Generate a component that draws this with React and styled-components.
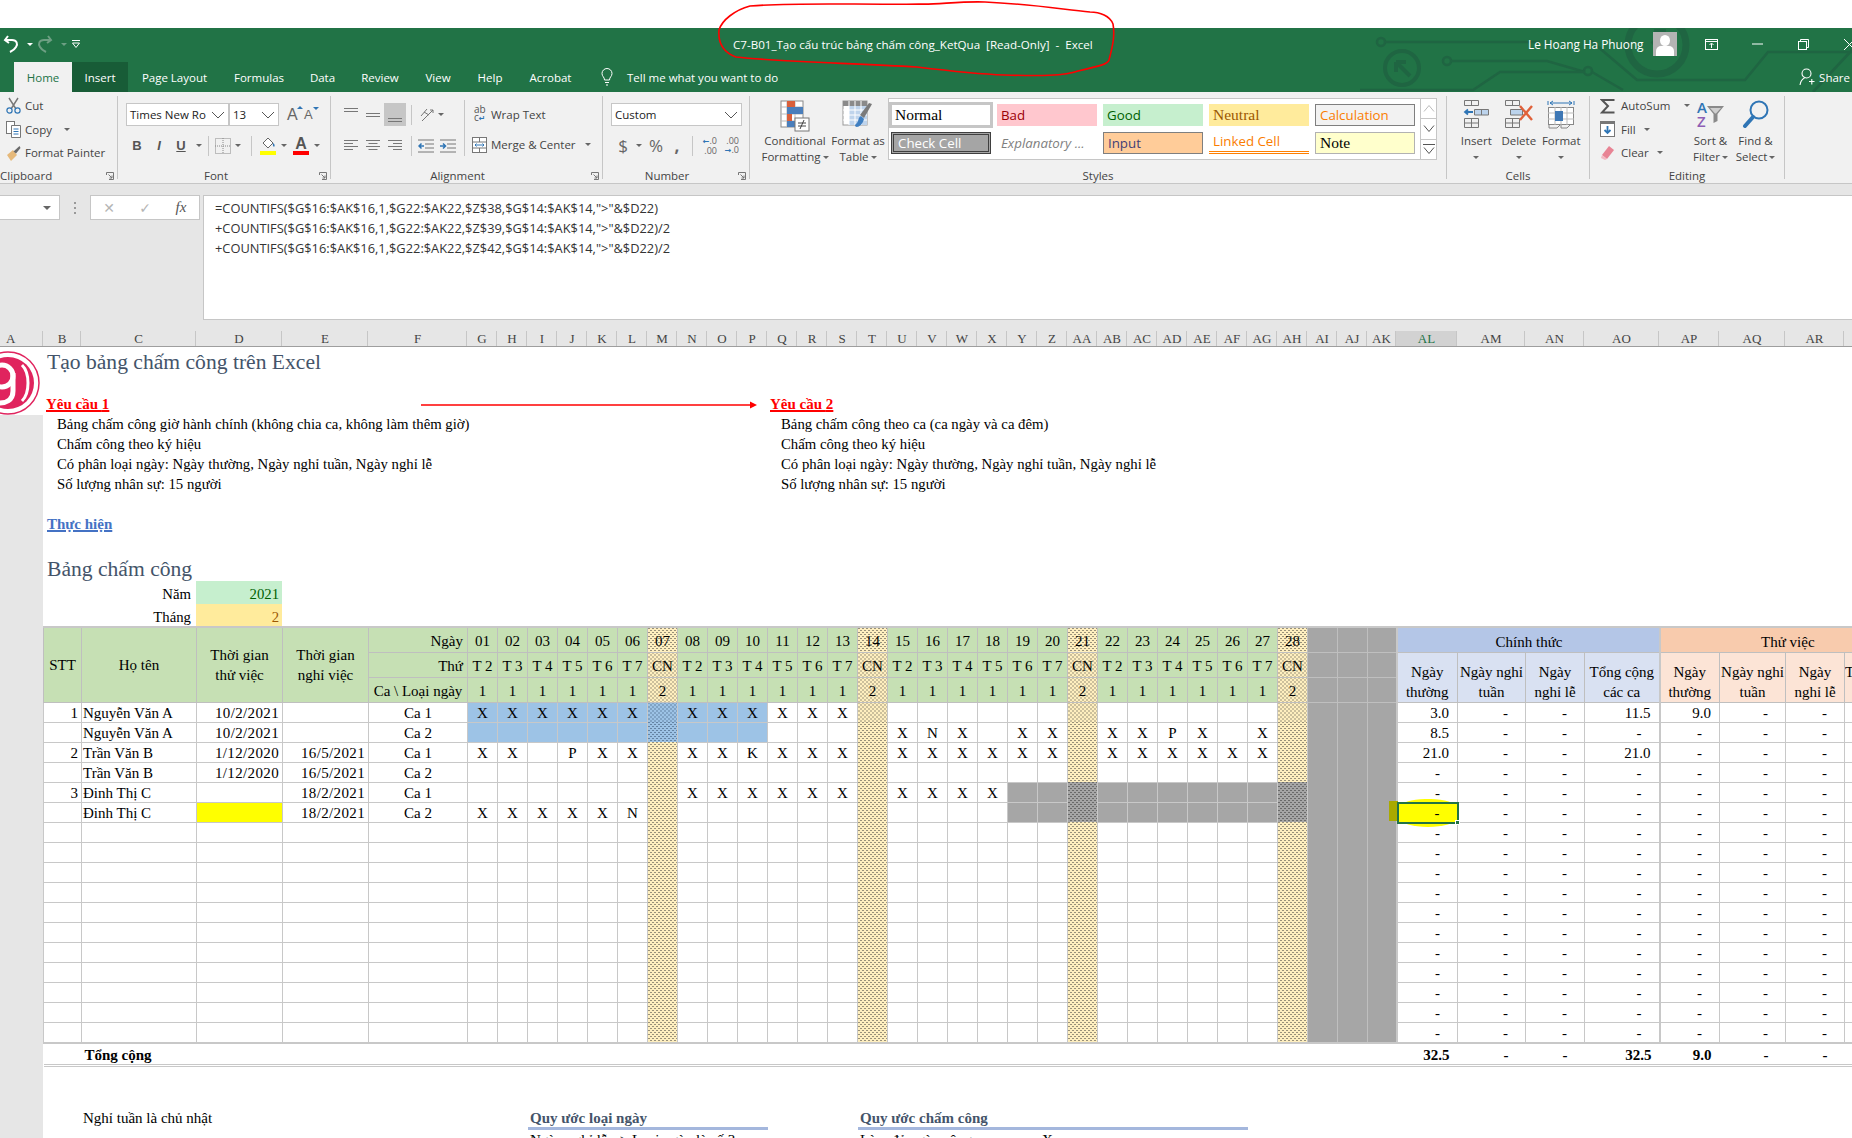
import React from 'react';
import styled, { createGlobalStyle, css } from 'styled-components';

const UI = '"Open Sans", "Noto Sans", sans-serif';
const SERIF = '"Liberation Serif", "Times New Roman", serif';

const GlobalStyle = createGlobalStyle`
  html, body { margin: 0; padding: 0; background: #fff; }
  * { box-sizing: border-box; }
  #root { width: 1852px; height: 1138px; overflow: hidden; }
`;

/* column widths of the sheet, B first (A is the gutter) */
const dayWidths = Array.from({ length: 31 }, (_, i) => (i === 30 ? 29 : 30));
const rightWidths = [61, 68, 59, 75, 60, 66, 59, 60];
const leftWidths = [38, 115, 86, 86, 99];
const colWidths = [...leftWidths, ...dayWidths, ...rightWidths];

const letters = [
  ...'ABCDEFGHIJKLMNOPQRSTUVWXYZ'.split(''),
  ...'ABCDEFGHIJKLMNOPQR'.split('').map((c) => 'A' + c),
  '',
];

const App = () => (
  <Page>
    <GlobalStyle />
    <TopGap />
    <Chrome>
      <Circuit />
      <TitleBar>
        <QuickAccess>
          <UndoIcon />
          <MiniCaret $light />
          <RedoIcon />
          <MiniCaret $dim />
          <CustomizeIcon />
        </QuickAccess>
        <WindowTitle>C7-B01_Tạo cấu trúc bảng chấm công_KetQua  [Read-Only]  -  Excel</WindowTitle>
        <UserName>Le Hoang Ha Phuong</UserName>
        <Avatar />
        <WindowButtons />
      </TitleBar>
      <TabRow>
        {[
          ['Home', 58],
          ['Insert', 56],
          ['Page Layout', 93],
          ['Formulas', 76],
          ['Data', 51],
          ['Review', 64],
          ['View', 52],
          ['Help', 52],
          ['Acrobat', 69],
        ].map(([name, w]) => (
          <Tab key={name} $w={w} $active={name === 'Home'} $hover={name === 'Insert'}>
            {name}
          </Tab>
        ))}
        <TellMe>
          <BulbIcon />
          Tell me what you want to do
        </TellMe>
        <Share>
          <ShareIcon />
          Share
        </Share>
      </TabRow>
    </Chrome>
    <Ribbon />
    <FormulaArea>
      <NameBox>
        <SolidCaret />
      </NameBox>
      <Dots>
        <i />
        <i />
        <i />
      </Dots>
      <FuncBox>
        <FuncBtn $c="#b5b5b5">✕</FuncBtn>
        <FuncBtn $c="#b5b5b5">✓</FuncBtn>
        <FxLabel>fx</FxLabel>
      </FuncBox>
      <FormulaBox>
        <div>=COUNTIFS($G$16:$AK$16,1,$G22:$AK22,$Z$38,$G$14:$AK$14,"&gt;"&amp;$D22)</div>
        <div>+COUNTIFS($G$16:$AK$16,1,$G22:$AK22,$Z$39,$G$14:$AK$14,"&gt;"&amp;$D22)/2</div>
        <div>+COUNTIFS($G$16:$AK$16,1,$G22:$AK22,$Z$42,$G$14:$AK$14,"&gt;"&amp;$D22)/2</div>
      </FormulaBox>
    </FormulaArea>
    <ColHeaders>
      <ColHead $w={43} $start>A</ColHead>
      {colWidths.map((w, i) => (
        <ColHead key={i} $w={w} $sel={letters[i + 1] === 'AL'}>
          {letters[i + 1]}
        </ColHead>
      ))}
    </ColHeaders>
    <Sheet>
      <Gutter>
        <Logo />
      </Gutter>
      <SheetBody>
        <Notes />
        <Attendance />
        <Footer />
      </SheetBody>
    </Sheet>
    <HandCircle />
  </Page>
);

/* ---------- ribbon ---------- */

const Ribbon = () => (
  <RibbonBar>
    <Group $w={118} label="Clipboard" labelPad={66} launcher>
      <StackCol $pl={6}>
        <SmallRow><ScissorsIcon />Cut</SmallRow>
        <SmallRow><CopyIcon />Copy<MiniCaret $gap={8} /></SmallRow>
        <SmallRow><PainterIcon />Format Painter</SmallRow>
      </StackCol>
    </Group>

    <Group $w={213} label="Font" labelPad={16} launcher>
      <ToolRows $pl={8}>
        <ToolRow>
          <SelectBox $w={103}>Times New Ro<Chevron /></SelectBox>
          <SelectBox $w={50}>13<Chevron /></SelectBox>
          <FontGrow $ml={8}>A<i /></FontGrow>
          <FontGrow $small $ml={7}>A<i /></FontGrow>
        </ToolRow>
        <ToolRow>
          <LetterBtn $italic={false}>B</LetterBtn>
          <LetterBtn $italic>I</LetterBtn>
          <LetterBtn $under>U</LetterBtn>
          <MiniCaret />
          <ToolSep $ml={6} />
          <BordersIcon />
          <MiniCaret $gap={4} />
          <ToolSep $ml={10} />
          <FillIcon />
          <MiniCaret $gap={5} />
          <ColorA />
          <MiniCaret $gap={5} />
        </ToolRow>
      </ToolRows>
    </Group>

    <Group $w={272} label="Alignment" labelPad={18} launcher>
      <AlignCols>
        <ToolRows $pl={9} $w={133}>
          <ToolRow>
            <AlignBtn><LinesIcon rows={[[2, 14], [5, 14]]} /></AlignBtn>
            <AlignBtn><LinesIcon rows={[[7, 14], [10, 14]]} /></AlignBtn>
            <AlignBtn $on><LinesIcon rows={[[12, 14], [15, 14]]} /></AlignBtn>
            <ToolSep $ml={5} />
            <OrientIcon />
            <MiniCaret $gap={3} />
          </ToolRow>
          <ToolRow>
            <AlignBtn><LinesIcon rows={[[3, 14], [6, 9], [9, 14], [12, 9]]} /></AlignBtn>
            <AlignBtn><LinesIcon rows={[[3, 14], [6, 9], [9, 14], [12, 9]]} center /></AlignBtn>
            <AlignBtn><LinesIcon rows={[[3, 14], [6, 9], [9, 14], [12, 9]]} right /></AlignBtn>
            <ToolSep $ml={5} />
            <IndentIcon />
            <IndentIcon flip />
          </ToolRow>
        </ToolRows>
        <ToolRows $pl={7} $sep>
          <ToolRow><WrapIcon /><RibbonText $ml={4}>Wrap Text</RibbonText></ToolRow>
          <ToolRow><MergeIcon /><RibbonText $ml={4}>Merge &amp; Center</RibbonText><MiniCaret $gap={9} /></ToolRow>
        </ToolRows>
      </AlignCols>
    </Group>

    <Group $w={147} label="Number" labelPad={18} launcher>
      <ToolRows $pl={8}>
        <ToolRow><SelectBox $w={131}>Custom<Chevron /></SelectBox></ToolRow>
        <ToolRow>
          <SymbolBtn $w={24}>$</SymbolBtn>
          <MiniCaret $gap={1} />
          <SymbolBtn $w={28}>%</SymbolBtn>
          <SymbolBtn $w={14} $bold>,</SymbolBtn>
          <ToolSep $ml={8} />
          <DecimalIcon />
          <DecimalIcon flip />
        </ToolRow>
      </ToolRows>
    </Group>

    <Group $w={697} label="Styles">
      <StylesBody>
        <BigBtn $w={66}>
          <CondIcon />
          <BigLabel>Conditional<br />Formatting<MiniCaret $gap={2} /></BigLabel>
        </BigBtn>
        <BigBtn $w={60}>
          <TableIcon />
          <BigLabel>Format as<br />Table<MiniCaret $gap={2} /></BigLabel>
        </BigBtn>
        <Gallery>
          <GalleryGrid>
            <StyleCell $v="normal">Normal</StyleCell>
            <StyleCell $v="bad">Bad</StyleCell>
            <StyleCell $v="good">Good</StyleCell>
            <StyleCell $v="neutral">Neutral</StyleCell>
            <StyleCell $v="calc">Calculation</StyleCell>
            <StyleCell $v="check">Check Cell</StyleCell>
            <StyleCell $v="explain">Explanatory ...</StyleCell>
            <StyleCell $v="input">Input</StyleCell>
            <StyleCell $v="linked">Linked Cell</StyleCell>
            <StyleCell $v="note">Note</StyleCell>
          </GalleryGrid>
          <GalleryScroll>
            <ScrollBtn $dim><ScrollChevron up /></ScrollBtn>
            <ScrollBtn><ScrollChevron /></ScrollBtn>
            <ScrollBtn $bar><ScrollChevron /></ScrollBtn>
          </GalleryScroll>
        </Gallery>
      </StylesBody>
    </Group>

    <Group $w={143} label="Cells">
      <CellsBody>
        <CellBtn><InsertIcon /><BigLabel>Insert<br /><MiniCaret $gap={0} /></BigLabel></CellBtn>
        <CellBtn><DeleteIcon /><BigLabel>Delete<br /><MiniCaret $gap={0} /></BigLabel></CellBtn>
        <CellBtn><FormatIcon /><BigLabel>Format<br /><MiniCaret $gap={0} /></BigLabel></CellBtn>
      </CellsBody>
    </Group>

    <Group $w={195} label="Editing">
      <EditingBody>
        <StackCol $w={88}>
          <SmallRow $gap={6}><SigmaIcon />AutoSum<MiniCaret $gap={8} /></SmallRow>
          <SmallRow $gap={6}><FillDownIcon />Fill<MiniCaret $gap={2} /></SmallRow>
          <SmallRow $gap={6}><EraserIcon />Clear<MiniCaret $gap={2} /></SmallRow>
        </StackCol>
        <BigBtn $w={45}>
          <SortIcon />
          <BigLabel>Sort &amp;<br />Filter<MiniCaret $gap={2} /></BigLabel>
        </BigBtn>
        <BigBtn $w={45}>
          <FindIcon />
          <BigLabel>Find &amp;<br />Select<MiniCaret $gap={2} /></BigLabel>
        </BigBtn>
      </EditingBody>
    </Group>
  </RibbonBar>
);

const Group = ({ $w, label, labelPad, launcher, children }) => (
  <GroupBox $w={$w}>
    <GroupBody>{children}</GroupBody>
    <GroupLabel $pr={labelPad}>{label}</GroupLabel>
    {launcher && <LauncherIcon />}
  </GroupBox>
);

/* ---------- sheet notes ---------- */

const reqLines = [
  ['Bảng chấm công giờ hành chính (không chia ca, không làm thêm giờ)', 'Bảng chấm công theo ca (ca ngày và ca đêm)'],
  ['Chấm công theo ký hiệu', 'Chấm công theo ký hiệu'],
  ['Có phân loại ngày: Ngày thường, Ngày nghỉ tuần, Ngày nghỉ lễ', 'Có phân loại ngày: Ngày thường, Ngày nghỉ tuần, Ngày nghỉ lễ'],
  ['Số lượng nhân sự: 15 người', 'Số lượng nhân sự: 15 người'],
];

const Notes = () => (
  <>
    <SheetTitle $h={30}>Tạo bảng chấm công trên Excel</SheetTitle>
    <Spacer $h={16} />
    <ReqRow>
      <RedArrow />
      {[0, 1].map((col) => (
        <Req key={col}>
          <ReqHead>Yêu cầu {col + 1}</ReqHead>
          {reqLines.map((l) => (
            <ReqLine key={l[col]}>{l[col]}</ReqLine>
          ))}
        </Req>
      ))}
    </ReqRow>
    <Spacer $h={20} />
    <LinkLine>Thực hiện</LinkLine>
    <Spacer $h={20} />
    <SheetTitle $h={27} $lift>Bảng chấm công</SheetTitle>
    <ParamRow>
      <ParamLabel>Năm</ParamLabel>
      <ParamValue $bg="#c6efce" $c="#006100">2021</ParamValue>
    </ParamRow>
    <ParamRow>
      <ParamLabel>Tháng</ParamLabel>
      <ParamValue $bg="#ffeb9c" $c="#9c5700">2</ParamValue>
    </ParamRow>
  </>
);

/* ---------- attendance table ---------- */

const weekdays = ['T 2', 'T 3', 'T 4', 'T 5', 'T 6', 'T 7', 'CN'];
const days = Array.from({ length: 28 }, (_, i) => i + 1);
const isSunday = (d) => d % 7 === 0;
const dash = '-';

const marks = (from, to, skip = {}) => {
  const out = {};
  for (let d = from; d <= to; d++) if (!isSunday(d)) out[d] = 'X';
  return { ...out, ...skip };
};

const employees = [
  { stt: 1, name: 'Nguyễn Văn A', start: '10/2/2021', end: '', ca: 'Ca 1', blue: true, marks: marks(1, 13), totals: ['3.0', dash, dash, '11.5', '9.0', dash, dash] },
  { name: 'Nguyễn Văn A', start: '10/2/2021', end: '', ca: 'Ca 2', blue: true, marks: { ...marks(15, 27, { 16: 'N', 18: '', 24: 'P', 26: '' }) }, totals: ['8.5', dash, dash, dash, dash, dash, dash] },
  { stt: 2, name: 'Trần Văn B', start: '1/12/2020', end: '16/5/2021', ca: 'Ca 1', marks: marks(1, 27, { 3: '', 4: 'P', 10: 'K' }), totals: ['21.0', dash, dash, '21.0', dash, dash, dash] },
  { name: 'Trần Văn B', start: '1/12/2020', end: '16/5/2021', ca: 'Ca 2', marks: {} },
  { stt: 3, name: 'Đinh Thị C', start: '', end: '18/2/2021', ca: 'Ca 1', gray: true, marks: marks(8, 18) },
  { name: 'Đinh Thị C', start: '', startBg: '#ffff00', end: '18/2/2021', ca: 'Ca 2', gray: true, selected: true, marks: marks(1, 6, { 6: 'N' }) },
  ...Array.from({ length: 11 }, () => ({ blank: true, marks: {} })),
];

const dayFill = (emp, d) => {
  if (emp.blue && d <= 10) return 'blue';
  if (emp.gray && d >= 19) return 'gray';
  return 'none';
};

const subHeads = ['Ngày<thường', 'Ngày nghỉ<tuần', 'Ngày<nghỉ lễ', 'Tổng cộng<các ca'];

const Attendance = () => (
  <Table>
    <colgroup>
      {colWidths.map((w, i) => (
        <col key={i} width={w} />
      ))}
    </colgroup>
    <tbody>
      <HeadRow>
        <HeadCell rowSpan={3}>STT</HeadCell>
        <HeadCell rowSpan={3}>Họ tên</HeadCell>
        <HeadCell rowSpan={3}>Thời gian<br />thử việc</HeadCell>
        <HeadCell rowSpan={3}>Thời gian<br />nghỉ việc</HeadCell>
        <HeadCell $right $drop>Ngày</HeadCell>
        {days.map((d) => (
          <HeadCell key={d} $drop $cn={isSunday(d)}>{String(d).padStart(2, '0')}</HeadCell>
        ))}
        <GrayCell /><GrayCell /><GrayCell />
        <BandCell colSpan={4} $bg="#b4c6e7" $pl={5}>Chính thức</BandCell>
        <BandCell colSpan={4} $bg="#f8cbad" $pl={14}>Thử việc</BandCell>
      </HeadRow>
      <HeadRow>
        <HeadCell $right $drop>Thứ</HeadCell>
        {days.map((d) => (
          <HeadCell key={d} $drop $cn={isSunday(d)}>{weekdays[(d - 1) % 7]}</HeadCell>
        ))}
        <GrayCell /><GrayCell /><GrayCell />
        {subHeads.map((t, i) => (
          <SubHead key={t} rowSpan={2} $bg="#d9e1f2" $thick={i === 0}>{t.split('<')[0]}<br />{t.split('<')[1]}</SubHead>
        ))}
        {subHeads.map((t, i) => (
          <SubHead key={t} rowSpan={2} $bg="#fce4d6" $thick={i === 0}>{t.split('<')[0]}<br />{t.split('<')[1]}</SubHead>
        ))}
      </HeadRow>
      <HeadRow>
        <HeadCell $drop>Ca \ Loại ngày</HeadCell>
        {days.map((d) => (
          <HeadCell key={d} $drop $cn={isSunday(d)}>{isSunday(d) ? 2 : 1}</HeadCell>
        ))}
        <GrayCell /><GrayCell /><GrayCell />
      </HeadRow>
      {employees.map((emp, r) => (
        <DataRow key={r}>
          <Cell $align="right">{emp.stt}</Cell>
          <NameCell>{emp.name}</NameCell>
          <Cell $align="right" $bg={emp.startBg} $date>{emp.start}</Cell>
          <Cell $align="right" $date>{emp.end}</Cell>
          <Cell $align="center">{emp.ca}</Cell>
          {days.map((d) => (
            <DayCell key={d} $cn={isSunday(d)} $fill={dayFill(emp, d)}>{emp.marks[d]}</DayCell>
          ))}
          <GrayCell $flat /><GrayCell $flat /><GrayCell $flat />
          {Array.from({ length: 7 }, (_, i) => {
            const v = emp.totals ? emp.totals[i] : dash;
            return (
              <NumCell key={i} $dash={v === dash} $thick={i === 0 || i === 4}>
                {v}
                {emp.selected && i === 0 && <SelectionMark />}
              </NumCell>
            );
          })}
          <Cell />
        </DataRow>
      ))}
      <TotalRow>
        <TotalCell />
        <TotalCell $pl={3}>Tổng cộng</TotalCell>
        <TotalCell colSpan={34} />
        {['32.5', dash, dash, '32.5', '9.0', dash, dash].map((v, i) => (
          <TotalCell key={i} $num $dash={v === dash}>{v}</TotalCell>
        ))}
        <TotalCell />
      </TotalRow>
    </tbody>
  </Table>
);

const Footer = () => (
  <FooterRow>
    <FooterNote>Nghỉ tuần là chủ nhật</FooterNote>
    <Legend $w={240} $mr={90}>
      <LegendHead>Quy ước loại ngày</LegendHead>
      <LegendLine>Ngày nghỉ lễ =&gt; Loại ngày là số 3</LegendLine>
    </Legend>
    <Legend $w={390}>
      <LegendHead>Quy ước chấm công</LegendHead>
      <LegendLine><LegendKey>Làm đủ ngày công</LegendKey>X</LegendLine>
    </Legend>
  </FooterRow>
);

/* ---------- drawings ---------- */

const Svg = styled.svg`
  display: block;
  flex: none;
  margin-left: ${(p) => p.$ml || 0}px;
`;

const UndoIcon = () => (
  <Svg width="16" height="18" viewBox="0 0 16 18" fill="none" stroke="#fff" strokeWidth="2">
    <path d="M5 1 L2 5 L6 8" />
    <path d="M2 5 H9 C14 5 15 9 13 12 C12 14 9 16 7 17" />
  </Svg>
);
const RedoIcon = () => (
  <Svg width="16" height="18" viewBox="0 0 16 18" fill="none" stroke="#6d9f83" strokeWidth="2">
    <path d="M11 1 L14 5 L10 8" />
    <path d="M14 5 H7 C2 5 1 9 3 12 C4 14 7 16 9 17" />
  </Svg>
);
const CustomizeIcon = () => (
  <Svg width="10" height="10" viewBox="0 0 10 10" fill="none" stroke="#fff">
    <path d="M1 1.5 H9" />
    <path d="M1.5 4 L5 8.5 L8.5 4 Z" />
  </Svg>
);
const BulbIcon = () => (
  <Svg width="14" height="18" viewBox="0 0 14 18" fill="none" stroke="#fff" strokeWidth="1">
    <path d="M4.5 12 C4.5 9 2 8.5 2 5.5 A5 5 0 0 1 12 5.5 C12 8.5 9.5 9 9.5 12 Z" />
    <path d="M5 14.5 H9 M6 17 H8" />
  </Svg>
);
const ShareIcon = () => (
  <Svg width="16" height="18" viewBox="0 0 16 18" fill="none" stroke="#fff" strokeWidth="1.1">
    <circle cx="7.5" cy="5.5" r="4.5" />
    <path d="M1 17 C1.5 13 3.5 11 5.5 10 M10 13.5 H15.5 M12.8 11 V16.5" />
  </Svg>
);

const Circuit = () => (
  <CircuitSvg viewBox="1360 28 492 64" width="492" height="64" fill="none" stroke="#1f6542" strokeWidth="2.6">
    <circle cx="1381" cy="42" r="4" />
    <path d="M1385 42 H1540" />
    <circle cx="1402" cy="68" r="17" strokeWidth="4" />
    <path d="M1396 62 L1410 76 M1396 62 H1406 M1396 62 V72" strokeWidth="4" />
    <circle cx="1447" cy="61" r="4" />
    <path d="M1451 61 H1547 L1585 72" />
    <circle cx="1588" cy="71" r="4" />
    <path d="M1360 90 H1473 L1500 72 H1585 M1592 72 L1623 90" />
    <circle cx="1657" cy="45" r="29" strokeWidth="7" />
    <path d="M1590 40 L1637 80 H1745 L1768 52 H1852 M1813 92 L1852 50" />
    <path d="M1652 44 L1664 32 M1654 31 H1664 V41" strokeWidth="4" />
  </CircuitSvg>
);

const WindowButtons = () => (
  <>
    <WinBtn>
      <Svg width="13" height="11" viewBox="0 0 13 11" fill="none" stroke="#fff">
        <rect x="0.5" y="0.5" width="12" height="10" />
        <path d="M0.5 2.5 H12.5 M6.5 9 V4.5 M4.5 6 L6.5 4 L8.5 6" />
      </Svg>
    </WinBtn>
    <WinBtn>
      <Svg width="11" height="2" viewBox="0 0 11 2" stroke="#fff"><path d="M0 1 H11" /></Svg>
    </WinBtn>
    <WinBtn>
      <Svg width="11" height="11" viewBox="0 0 11 11" fill="none" stroke="#fff">
        <rect x="0.5" y="2.5" width="8" height="8" />
        <path d="M2.5 2.5 V0.5 H10.5 V8.5 H8.5" />
      </Svg>
    </WinBtn>
    <WinBtn>
      <Svg width="11" height="11" viewBox="0 0 11 11" stroke="#fff"><path d="M0 0 L11 11 M11 0 L0 11" /></Svg>
    </WinBtn>
  </>
);

const Chevron = () => (
  <Svg $ml={2} width="14" height="8" viewBox="0 0 14 8" fill="none" stroke="#555">
    <path d="M1 1 L7 7 L13 1" />
  </Svg>
);

const ScrollChevron = ({ up }) => (
  <Svg width="12" height="7" viewBox="0 0 12 7" fill="none" stroke="currentColor">
    <path d={up ? 'M1 6.5 L6 .5 L11 6.5' : 'M1 .5 L6 6.5 L11 .5'} />
  </Svg>
);

const ScissorsIcon = () => (
  <Svg width="15" height="17" viewBox="0 0 15 17" fill="none">
    <path d="M3 1 L10 12 M12 1 L5 12" stroke="#777" strokeWidth="1.4" />
    <circle cx="3.5" cy="13.5" r="2.6" stroke="#2f75b5" strokeWidth="1.2" />
    <circle cx="11.5" cy="13.5" r="2.6" stroke="#2f75b5" strokeWidth="1.2" />
  </Svg>
);
const CopyIcon = () => (
  <Svg width="15" height="17" viewBox="0 0 15 17" fill="#fff" stroke="#777">
    <rect x="0.5" y="0.5" width="8" height="12" />
    <path d="M5.5 4.5 H14.5 V16.5 H5.5 Z" />
    <path d="M7.5 8 H12.5 M7.5 10.5 H12.5 M7.5 13 H12.5" stroke="#2f75b5" />
  </Svg>
);
const PainterIcon = () => (
  <Svg width="15" height="16" viewBox="0 0 15 16" fill="none">
    <path d="M1 10 L7 5 L11 10 L5 16 Z" fill="#e6b97a" />
    <path d="M7.5 6.5 L13.5 1 L14.5 3 L10 8.5 Z" fill="#6a6a6a" />
  </Svg>
);
const BordersIcon = () => (
  <Svg $ml={6} width="16" height="16" viewBox="0 0 16 16" fill="none" stroke="#888" strokeDasharray="1 1">
    <rect x="0.5" y="0.5" width="15" height="15" />
    <path d="M8 0 V16 M0 8 H16" />
  </Svg>
);
const FillIcon = () => (
  <Svg $ml={8} width="16" height="19" viewBox="0 0 16 19">
    <path d="M3 7 L8 2 L13 7 L8 12 Z" fill="#fff" stroke="#666" />
    <path d="M13 7 C15 8 15 10 14 11 C13 10 12.5 9 13 7 Z" fill="#2f75b5" />
    <rect y="15" width="16" height="4" fill="#ffff00" />
  </Svg>
);
const ColorA = () => (
  <ColorABox>
    A
    <i />
  </ColorABox>
);
const LinesIcon = ({ rows, center, right }) => (
  <Svg width="14" height="18" viewBox="0 0 14 18" stroke="#777">
    {rows.map(([y, w]) => {
      const x = right ? 14 - w : center ? (14 - w) / 2 : 0;
      return <path key={y} d={`M${x} ${y + 0.5} H${x + w}`} />;
    })}
  </Svg>
);
const OrientIcon = () => (
  <Svg $ml={7} width="16" height="16" viewBox="0 0 16 16" fill="none" stroke="#777">
    <path d="M2 9 L8 2 M5 5 L10 8 M3 14 L14 3 M11 3 H14 V6" />
  </Svg>
);
const IndentIcon = ({ flip }) => (
  <Svg $ml={6} width="16" height="14" viewBox="0 0 16 14" fill="none">
    <path d="M0 1 H16 M7 5 H16 M7 9 H16 M0 13 H16" stroke="#777" />
    <path d={flip ? 'M0 7 H5 M3 4.5 L5.5 7 L3 9.5' : 'M6 7 H1 M3.5 4.5 L1 7 L3.5 9.5'} stroke="#2f75b5" strokeWidth="1.5" />
  </Svg>
);
const WrapIcon = () => (
  <WrapBox>
    <span>ab</span>
    <span>c<b>↵</b></span>
  </WrapBox>
);
const MergeIcon = () => (
  <Svg width="15" height="16" viewBox="0 0 15 16" fill="#fff" stroke="#777">
    <rect x="0.5" y="0.5" width="14" height="15" />
    <path d="M0 5 H15 M0 11 H15 M7.5 0 V5 M7.5 11 V16" />
    <path d="M3 8 H12 M4.5 6.5 L3 8 L4.5 9.5 M10.5 6.5 L12 8 L10.5 9.5" stroke="#2f75b5" fill="none" />
  </Svg>
);
const DecimalIcon = ({ flip }) => (
  <DecimalBox $ml={flip ? 6 : 8}>
    {flip ? <><span>.00</span><span><b>→</b>.0</span></> : <><span><b>←</b>.0</span><span>.00</span></>}
  </DecimalBox>
);
const CondIcon = () => (
  <Svg width="30" height="32" viewBox="0 0 30 32">
    <rect x="1" y="1" width="22" height="26" fill="#fff" stroke="#8a8a8a" />
    <path d="M7 1 V27 M15 1 V27 M1 7 H23 M1 14 H23 M1 21 H23" stroke="#bbb" />
    <rect x="7" y="1" width="8" height="6" fill="#d9603b" />
    <rect x="7" y="7" width="16" height="7" fill="#4a7ebb" />
    <rect x="7" y="14" width="5" height="7" fill="#d9603b" />
    <rect x="7" y="21" width="8" height="6" fill="#4a7ebb" />
    <rect x="15" y="18" width="14" height="13" fill="#fff" stroke="#777" />
    <path d="M18 23 H26 M18 26 H26 M24 20 L20 29" stroke="#444" fill="none" />
  </Svg>
);
const TableIcon = () => (
  <Svg width="32" height="32" viewBox="0 0 32 32">
    <rect x="1" y="1" width="24" height="24" fill="#fff" stroke="#9a9a9a" />
    <rect x="1" y="1" width="24" height="5" fill="#8a8a8a" />
    <rect x="7" y="6" width="18" height="19" fill="#bfd4ec" />
    <path d="M7 1 V25 M13 1 V25 M19 1 V25 M1 10 H25 M1 15 H25 M1 20 H25" stroke="#fff" />
    <path d="M30 4 L22 18 L18 15 L27 3 Z" fill="#7a7a7a" />
    <path d="M19 16 C15 18 18 21 13 25 C13 29 20 27 22 19 Z" fill="#3f7fc1" />
  </Svg>
);
const InsertIcon = () => (
  <Svg width="26" height="28" viewBox="0 0 26 28" fill="none" stroke="#777">
    <path d="M1.5 .5 H15.5 V5.5 H1.5 Z M8.5 .5 V5.5" />
    <path d="M11.5 9.5 H25.5 V15 H11.5 Z M18.5 9.5 V15" fill="#bcd3ec" />
    <path d="M10 12 H2 M5 9.5 L2 12 L5 14.5" stroke="#2f75b5" strokeWidth="1.8" />
    <path d="M1.5 18.5 H15.5 V27.5 H1.5 Z M8.5 18.5 V27.5 M1.5 23 H15.5" />
  </Svg>
);
const DeleteIcon = () => (
  <Svg width="30" height="28" viewBox="0 0 30 28" fill="none" stroke="#777">
    <path d="M1.5 .5 H15.5 V5.5 H1.5 Z M8.5 .5 V5.5" />
    <path d="M6.5 9.5 H18.5 V15 H6.5 Z" fill="#bcd3ec" />
    <path d="M1.5 18.5 H15.5 V27.5 H1.5 Z M8.5 18.5 V27.5 M1.5 23 H15.5" />
    <path d="M16 6 L28 20 M28 6 L16 20" stroke="#e0613a" strokeWidth="2.4" />
  </Svg>
);
const FormatIcon = () => (
  <Svg width="28" height="30" viewBox="0 0 28 30" fill="none" stroke="#888">
    <path d="M1 1 V5 M27 1 V5 M3 3 H25 M3 3 L6 1 M3 3 L6 5 M25 3 L22 1 M25 3 L22 5" stroke="#2f75b5" />
    <rect x="1.5" y="7.5" width="25" height="17" fill="#fff" />
    <path d="M8 7 V25 M14 7 V25 M20 7 V25 M1 13 H27 M1 19 H27" stroke="#bbb" />
    <rect x="8" y="11" width="8" height="10" fill="#3f78b5" stroke="none" />
    <path d="M2 25 V28 H10 L13 25 M14 25 V28 H20 L23 25" />
  </Svg>
);
const SigmaIcon = () => (
  <Svg width="15" height="16" viewBox="0 0 15 16" fill="none" stroke="#555" strokeWidth="2">
    <path d="M14.5 2 H2 L8 8 L2 14.5 H14.5" />
  </Svg>
);
const FillDownIcon = () => (
  <Svg width="15" height="16" viewBox="0 0 15 16">
    <rect x="0.5" y="0.5" width="14" height="15" fill="#fff" stroke="#777" />
    <rect x="0" y="0" width="15" height="3" fill="#777" />
    <path d="M7.5 5 V12 M4.5 9 L7.5 12 L10.5 9" stroke="#2f75b5" strokeWidth="1.8" fill="none" />
  </Svg>
);
const EraserIcon = () => (
  <Svg width="15" height="14" viewBox="0 0 15 14">
    <path d="M9 0 L14 4 L7 13 L2 9 Z" fill="#e88494" />
    <path d="M2 9 L7 13 L5 14 L1 12 Z" fill="#f3b9c2" />
  </Svg>
);
const SortIcon = () => (
  <SortBox>
    <AZ>
      <span>A</span>
      <span>Z</span>
    </AZ>
    <Svg width="17" height="17" viewBox="0 0 17 17">
      <path d="M0 0 H17 L10.5 8 V15 L6.5 17 V8 Z" fill="#8a8a8a" />
      <path d="M3 2 H14 L9 7.5 H8 Z" fill="#cfcfcf" />
    </Svg>
  </SortBox>
);
const FindIcon = () => (
  <Svg width="28" height="28" viewBox="0 0 28 28" fill="none" stroke="#2f75b5">
    <circle cx="17" cy="10" r="8.5" strokeWidth="2" />
    <path d="M11 17 L3 26" strokeWidth="4" strokeLinecap="round" />
  </Svg>
);
const LauncherIcon = () => (
  <LauncherSvg width="8" height="8" viewBox="0 0 8 8" fill="none" stroke="#777">
    <path d="M.5 3 V.5 H7.5 V7.5 H3 M2.5 2.5 L6 6 M3.5 6 H6 V3.5" />
  </LauncherSvg>
);

const Logo = () => (
  <LogoBox>
    <Svg width="43" height="64" viewBox="0 0 43 64" fill="none">
      <circle cx="8" cy="32" r="31" stroke="#e0245e" strokeWidth="1.5" />
      <circle cx="8" cy="32" r="26" fill="#e0245e" />
      <circle cx="2" cy="25" r="11" stroke="#fff" strokeWidth="5" />
      <path d="M13 22 V40 C13 50 5 52 0 52" stroke="#fff" strokeWidth="5" />
      <path d="M22 14 C30 22 30 42 22 50" stroke="#fff" strokeWidth="3" />
    </Svg>
  </LogoBox>
);

const RedArrow = () => (
  <ArrowSvg width="337" height="10" viewBox="0 0 337 10">
    <path d="M0 5 H330" stroke="#ff0000" strokeWidth="1.6" />
    <path d="M329 1.5 L336 5 L329 8.5 Z" fill="#ff0000" />
  </ArrowSvg>
);

const SelectionMark = () => (
  <>
    <OliveBlob />
    <YellowBlob />
    <SelectBoxMark>
      <span>{dash}</span>
      <i />
    </SelectBoxMark>
  </>
);

const HandCircle = () => (
  <HandSvg width="420" height="80" viewBox="710 0 420 80" fill="none" stroke="#ff0000" strokeWidth="1.6">
    <path d="M919 4 C860 5 800 2 750 6 C735 10 722 20 719 30 C718 42 722 52 736 57 C780 62 850 63 917 67 C950 71 975 74 1004 75 C1040 76 1065 76 1078 71 C1100 66 1108 64 1109 60 C1113 45 1115 35 1113 24 C1110 16 1100 12 1090 12 C1060 9 1030 4 985 2 C960 1 935 5 919 4 Z" />
  </HandSvg>
);

/* ---------- styled parts ---------- */

const Page = styled.div`
  position: relative;
  width: 1852px;
  height: 1138px;
  overflow: hidden;
  background: #fff;
  font-family: ${SERIF};
`;

const HandSvg = styled.svg`
  position: absolute;
  left: 710px;
  top: 0;
`;

const TopGap = styled.div`
  height: 28px;
`;

const Chrome = styled.div`
  position: relative;
  height: 64px;
  background: #217346;
  overflow: hidden;
  font-family: ${UI};
  color: #fff;
`;

const CircuitSvg = styled.svg`
  position: absolute;
  left: 1360px;
  top: 0;
`;

const TitleBar = styled.div`
  position: relative;
  display: flex;
  align-items: center;
  height: 34px;
  padding-bottom: 2px;
`;

const QuickAccess = styled.div`
  display: flex;
  flex: none;
  align-items: center;
  width: 733px;
  padding-left: 3px;
  gap: 4px;
`;

const WindowTitle = styled.div`
  flex: none;
  width: 795px;
  font-size: 11.6px;
  white-space: pre;
`;

const UserName = styled.div`
  flex: none;
  width: 125px;
  font-size: 11.8px;
  white-space: nowrap;
`;

const Avatar = styled.div`
  position: relative;
  flex: none;
  width: 24px;
  height: 24px;
  margin-right: 11px;
  background: #b4b4b4;
  overflow: hidden;
  &::before {
    content: '';
    position: absolute;
    left: 7px;
    top: 3px;
    width: 10px;
    height: 11px;
    border-radius: 50%;
    background: #fff;
  }
  &::after {
    content: '';
    position: absolute;
    left: 3px;
    top: 14px;
    width: 18px;
    height: 12px;
    border-radius: 5px 5px 0 0;
    background: #fff;
  }
`;

const WinBtn = styled.div`
  display: flex;
  flex: none;
  align-items: center;
  justify-content: center;
  width: 46px;
  height: 32px;
`;

const TabRow = styled.div`
  position: relative;
  display: flex;
  align-items: stretch;
  height: 30px;
  padding-left: 14px;
`;

const Tab = styled.div`
  display: flex;
  align-items: center;
  justify-content: center;
  width: ${(p) => p.$w}px;
  font-size: 11.5px;
  background: ${(p) => (p.$active ? '#f1f1f1' : p.$hover ? '#185c37' : 'transparent')};
  color: ${(p) => (p.$active ? '#217346' : '#fff')};
`;

const TellMe = styled.div`
  display: flex;
  align-items: center;
  gap: 13px;
  margin-left: 15px;
  font-size: 11.5px;
`;

const Share = styled.div`
  display: flex;
  align-items: center;
  gap: 4px;
  margin-left: auto;
  padding-right: 2px;
  font-size: 11.5px;
`;

const RibbonBar = styled.div`
  display: flex;
  height: 92px;
  padding: 4px 0;
  background: #f1f1f1;
  border-bottom: 1px solid #c6c6c6;
  font-family: ${UI};
  font-size: 11.5px;
  color: #444;
`;

const GroupBox = styled.div`
  position: relative;
  flex: none;
  width: ${(p) => p.$w}px;
  height: 83px;
  border-right: 1px solid #c6c6c6;
`;

const GroupBody = styled.div`
  display: flow-root;
  height: 72px;
`;

const GroupLabel = styled.div`
  height: 12px;
  line-height: 16px;
  font-size: 11.5px;
  text-align: center;
  padding-right: ${(p) => p.$pr || 0}px;
  white-space: nowrap;
`;

const LauncherSvg = styled.svg`
  position: absolute;
  right: 3px;
  bottom: -1px;
`;

const StackCol = styled.div`
  display: flex;
  flex: none;
  flex-direction: column;
  width: ${(p) => (p.$w ? `${p.$w}px` : 'auto')};
  margin-top: -2px;
  padding-left: ${(p) => p.$pl || 0}px;
`;

const SmallRow = styled.div`
  display: flex;
  align-items: center;
  gap: ${(p) => p.$gap || 4}px;
  height: 23.5px;
  white-space: nowrap;
`;

const MiniCaret = styled.span`
  display: inline-block;
  flex: none;
  width: 0;
  height: 0;
  margin-left: ${(p) => p.$gap ?? 4}px;
  vertical-align: middle;
  border-left: 3px solid transparent;
  border-right: 3px solid transparent;
  border-top: 3px solid ${(p) => (p.$light ? '#fff' : p.$dim ? '#6d9f83' : '#666')};
`;

const SolidCaret = styled(MiniCaret)`
  border-left-width: 4px;
  border-right-width: 4px;
  border-top-width: 4px;
`;

const ToolRows = styled.div`
  display: flex;
  flex: none;
  flex-direction: column;
  gap: 8px;
  ${(p) => p.$w && `width: ${p.$w}px;`}
  padding-top: 7px;
  padding-left: ${(p) => p.$pl || 0}px;
  ${(p) =>
    p.$sep &&
    css`
      border-left: 1px solid #c6c6c6;
      height: 56px;
      margin-top: 4px;
      padding-top: 3px;
    `}
`;

const ToolRow = styled.div`
  display: flex;
  align-items: center;
  height: 23px;
`;

const SelectBox = styled.div`
  display: flex;
  flex: none;
  align-items: center;
  justify-content: space-between;
  width: ${(p) => p.$w}px;
  height: 23px;
  padding: 0 3px;
  background: #fff;
  border: 1px solid #c6c6c6;
  color: #222;
  font-size: 11.5px;
  white-space: nowrap;
`;

const FontGrow = styled.div`
  position: relative;
  flex: none;
  width: 10px;
  margin-left: ${(p) => p.$ml}px;
  font-family: "Liberation Sans", sans-serif;
  font-size: ${(p) => (p.$small ? 13 : 16)}px;
  color: #666;
  i {
    position: absolute;
    left: ${(p) => (p.$small ? 9 : 10)}px;
    top: 0;
    width: 0;
    height: 0;
    border-left: 3px solid transparent;
    border-right: 3px solid transparent;
    ${(p) => (p.$small ? 'border-top: 3px solid #2f75b5;' : 'border-bottom: 3px solid #2f75b5;')}
  }
`;

const LetterBtn = styled.div`
  flex: none;
  width: 22px;
  text-align: center;
  font-family: "Liberation Sans", sans-serif;
  font-size: 13px;
  font-weight: 700;
  font-style: ${(p) => (p.$italic ? 'italic' : 'normal')};
  text-decoration: ${(p) => (p.$under ? 'underline' : 'none')};
  color: #555;
`;

const ToolSep = styled.div`
  flex: none;
  width: 1px;
  height: 20px;
  margin-left: ${(p) => p.$ml}px;
  background: #c6c6c6;
`;

const ColorABox = styled.div`
  position: relative;
  flex: none;
  width: 16px;
  height: 19px;
  margin-left: 6px;
  font-family: "Liberation Sans", sans-serif;
  font-size: 16px;
  font-weight: 700;
  line-height: 15px;
  text-align: center;
  color: #555;
  i {
    position: absolute;
    left: 0;
    bottom: 0;
    width: 16px;
    height: 4px;
    background: #ff0000;
  }
`;

const AlignCols = styled.div`
  display: flex;
`;

const AlignBtn = styled.div`
  display: flex;
  flex: none;
  align-items: center;
  justify-content: center;
  width: 22px;
  height: 23px;
  background: ${(p) => (p.$on ? '#c6c6c6' : 'transparent')};
`;

const RibbonText = styled.span`
  margin-left: ${(p) => p.$ml}px;
  white-space: nowrap;
`;

const WrapBox = styled.div`
  display: flex;
  flex: none;
  flex-direction: column;
  margin-left: 2px;
  width: 13px;
  font-size: 10px;
  line-height: 8px;
  color: #555;
  b {
    font-family: "DejaVu Sans", sans-serif;
    font-size: 8px;
    color: #2f75b5;
  }
`;

const SymbolBtn = styled.div`
  flex: none;
  width: ${(p) => p.$w}px;
  text-align: center;
  font-size: 17px;
  font-weight: ${(p) => (p.$bold ? 700 : 400)};
  color: #666;
`;

const DecimalBox = styled.div`
  display: flex;
  flex: none;
  flex-direction: column;
  align-items: flex-end;
  width: 16px;
  margin-left: ${(p) => p.$ml}px;
  font-size: 9px;
  line-height: 9px;
  color: #666;
  white-space: nowrap;
  b {
    font-family: "DejaVu Sans", sans-serif;
    font-size: 8px;
    color: #2f75b5;
  }
`;

const StylesBody = styled.div`
  display: flex;
  padding-left: 12px;
`;

const BigBtn = styled.div`
  position: relative;
  display: flex;
  flex: none;
  flex-direction: column;
  align-items: center;
  width: ${(p) => p.$w}px;
  padding-top: 4px;
`;

const BigLabel = styled.div`
  position: absolute;
  top: 37px;
  line-height: 16px;
  text-align: center;
  white-space: nowrap;
`;

const Gallery = styled.div`
  display: flex;
  flex: none;
  width: 549px;
  height: 62px;
  margin-top: 2px;
  background: #fff;
  border: 1px solid #c6c6c6;
`;

const GalleryGrid = styled.div`
  display: grid;
  grid-template-columns: repeat(5, 100px);
  grid-auto-rows: 22px;
  column-gap: 6px;
  row-gap: 6px;
  width: 532px;
  padding: 5px 2px;
`;

const styleVariants = {
  normal: css`
    background: #fff;
    color: #000;
    font-family: ${SERIF};
    font-size: 15.5px;
    outline: 3px solid #c6c6c6;
    outline-offset: -1px;
  `,
  bad: css`
    background: #ffc7ce;
    color: #9c0006;
  `,
  good: css`
    background: #c6efce;
    color: #006100;
  `,
  neutral: css`
    background: #ffeb9c;
    color: #9c5700;
    font-family: ${SERIF};
    font-size: 15.5px;
  `,
  calc: css`
    background: #f2f2f2;
    color: #fa7d00;
    border: 1px solid #7f7f7f;
  `,
  check: css`
    background: #a5a5a5;
    color: #fff;
    border: 3px double #3f3f3f;
  `,
  explain: css`
    background: #fff;
    color: #7f7f7f;
    font-style: italic;
  `,
  input: css`
    background: #ffcc99;
    color: #3f3f76;
    border: 1px solid #7f7f7f;
  `,
  linked: css`
    background: #fff;
    color: #fa7d00;
    border-bottom: 3px double #ff8001;
  `,
  note: css`
    background: #ffffcc;
    color: #000;
    border: 1px solid #b2b2b2;
    font-family: ${SERIF};
    font-size: 15.5px;
  `,
};

const StyleCell = styled.div`
  display: flex;
  align-items: center;
  padding-left: 4px;
  padding-bottom: 1px;
  font-size: 13.3px;
  white-space: nowrap;
  overflow: hidden;
  ${(p) => styleVariants[p.$v]}
`;

const GalleryScroll = styled.div`
  display: flex;
  flex-direction: column;
  width: 16px;
  margin-left: auto;
  border-left: 1px solid #c6c6c6;
`;

const ScrollBtn = styled.div`
  display: flex;
  flex: 1;
  flex-direction: column;
  align-items: center;
  justify-content: center;
  gap: 2px;
  color: ${(p) => (p.$dim ? '#bbb' : '#555')};
  border-bottom: 1px solid #c6c6c6;
  &:last-child {
    border-bottom: 0;
  }
  ${(p) =>
    p.$bar &&
    css`
      &::before {
        content: '';
        width: 12px;
        height: 1px;
        background: #555;
      }
    `}
`;

const CellsBody = styled.div`
  position: relative;
  display: flex;
  padding-left: 8px;
`;

const CellBtn = styled.div`
  position: relative;
  display: flex;
  flex: none;
  flex-direction: column;
  align-items: center;
  width: 42.5px;
  padding-top: 4px;
`;

const EditingBody = styled.div`
  display: flex;
  padding-left: 10px;
`;

const SortBox = styled.div`
  display: flex;
  align-items: center;
`;

const AZ = styled.div`
  display: flex;
  flex-direction: column;
  font-size: 15px;
  font-weight: 600;
  line-height: 14px;
  color: #2f75b5;
  span + span {
    color: #8e5fb5;
  }
`;

const FormulaArea = styled.div`
  display: flex;
  height: 136px;
  padding-top: 11px;
  background: #e6e6e6;
`;

const NameBox = styled.div`
  display: flex;
  align-items: center;
  justify-content: flex-end;
  width: 60px;
  height: 25px;
  padding-right: 8px;
  background: #fff;
  border: 1px solid #c6c6c6;
  border-left: 0;
`;

const Dots = styled.div`
  display: flex;
  flex-direction: column;
  align-items: center;
  justify-content: center;
  gap: 3px;
  width: 30px;
  height: 25px;
  i {
    width: 2px;
    height: 2px;
    background: #999;
  }
`;

const FuncBox = styled.div`
  display: flex;
  align-items: center;
  width: 110px;
  height: 25px;
  background: #fff;
  border: 1px solid #c6c6c6;
`;

const FuncBtn = styled.div`
  width: 36px;
  text-align: center;
  font-family: "DejaVu Sans", sans-serif;
  font-size: 14px;
  color: ${(p) => p.$c};
`;

const FxLabel = styled.div`
  width: 36px;
  text-align: center;
  font-family: ${SERIF};
  font-size: 15px;
  font-style: italic;
  color: #555;
`;

const FormulaBox = styled.div`
  flex: 1;
  height: 125px;
  margin-left: 3px;
  padding: 2px 11px;
  background: #fff;
  border: 1px solid #c6c6c6;
  border-right: 0;
  font-family: ${UI};
  font-size: 12.85px;
  line-height: 20px;
  color: #333;
  white-space: nowrap;
`;

const ColHeaders = styled.div`
  display: flex;
  height: 27px;
  padding-top: 11px;
  background: #e6e6e6;
  border-bottom: 1px solid #9e9e9e;
`;

const ColHead = styled.div`
  flex: none;
  width: ${(p) => p.$w}px;
  height: 15px;
  padding-left: ${(p) => (p.$start ? 6 : 1)}px;
  line-height: 16px;
  font-size: 13px;
  text-align: ${(p) => (p.$start ? 'left' : 'center')};
  color: ${(p) => (p.$sel ? '#217346' : '#444')};
  background: ${(p) => (p.$sel ? '#d2d2d2' : 'transparent')};
  border-right: 1px solid #c6c6c6;
`;

const Sheet = styled.div`
  display: flex;
  height: 791px;
  font-size: 14.75px;
  color: #000;
`;

const Gutter = styled.div`
  flex: none;
  width: 43px;
  background: #e6e6e6;
`;

const LogoBox = styled.div`
  height: 68px;
  padding-top: 4px;
  background: #fff;
  overflow: hidden;
`;

const SheetBody = styled.div`
  flex: 1;
  min-width: 0;
  background: #fff;
  overflow: hidden;
`;

const Spacer = styled.div`
  height: ${(p) => p.$h}px;
`;

const SheetTitle = styled.div`
  height: ${(p) => p.$h}px;
  line-height: ${(p) => p.$h + (p.$lift ? 3 : 0)}px;
  padding-left: 4px;
  font-size: 21.6px;
  color: #44546a;
  white-space: nowrap;
`;

const ReqRow = styled.div`
  position: relative;
  display: flex;
`;

const ArrowSvg = styled(Svg)`
  position: absolute;
  left: 378px;
  top: 7px;
`;

const Req = styled.div`
  flex: none;
  width: 724px;
`;

const ReqHead = styled.div`
  height: 21px;
  line-height: 23px;
  padding-left: 3px;
  font-size: 15px;
  font-weight: 700;
  color: #ff0000;
  text-decoration: underline;
  text-decoration-thickness: 2px;
`;

const ReqLine = styled.div`
  height: 20px;
  line-height: 20px;
  padding-left: 14px;
  white-space: nowrap;
`;

const LinkLine = styled.div`
  height: 20px;
  line-height: 20px;
  padding-left: 4px;
  font-size: 15px;
  font-weight: 700;
  color: #4472c4;
  text-decoration: underline;
  text-decoration-thickness: 2px;
`;

const ParamRow = styled.div`
  display: flex;
  height: 22.5px;
  line-height: 26px;
`;

const ParamLabel = styled.div`
  width: 153px;
  padding-right: 5px;
  text-align: right;
`;

const ParamValue = styled.div`
  width: 86px;
  padding-right: 3px;
  text-align: right;
  background: ${(p) => p.$bg};
  color: ${(p) => p.$c};
`;

const Table = styled.table`
  table-layout: fixed;
  width: ${colWidths.reduce((a, b) => a + b, 0)}px;
  border-collapse: collapse;
  border-top: 2px solid #c8c8c8;
  font-size: 15px;
  td {
    padding: 0 3px;
    overflow: hidden;
    white-space: nowrap;
  }
`;

/* one dark pixel every 4px, staggered, the way Excel paints a dotted fill */
const cnPattern = (base, dot) => css`
  background-color: ${base};
  background-image: radial-gradient(circle at 0.5px 0.5px, ${dot} 0.6px, transparent 0.7px),
    radial-gradient(circle at 0.5px 0.5px, ${dot} 0.6px, transparent 0.7px);
  background-size: 4px 4px;
  background-position: 0 0, 2px 2px;
`;

const HeadRow = styled.tr`
  height: 25px;
`;

const HeadCell = styled.td`
  border: 1px solid #bfbfbf;
  padding: 0 !important;
  ${(p) => p.$drop && 'padding-top: 2px !important;'}
  text-align: ${(p) => (p.$right ? 'right' : 'center')};
  ${(p) => p.$right && 'padding-right: 4px !important;'}
  line-height: 20px;
  ${(p) => (p.$cn ? cnPattern('#ffefbf', '#333') : 'background: #c6e0b4;')}
`;

const GrayCell = styled.td`
  background: #a6a6a6;
  border: 1px solid #bfbfbf;
  ${(p) => p.$flat && 'border-top: 0; border-bottom: 0;'}
`;

const BandCell = styled.td`
  background: ${(p) => p.$bg};
  border: 1px solid #bfbfbf;
  border-left: 2px solid #c8c8c8;
  text-align: center;
  vertical-align: bottom;
  line-height: 20px;
  padding-left: ${(p) => p.$pl}px !important;
`;

const SubHead = styled.td`
  background: ${(p) => p.$bg};
  border: 1px solid #bfbfbf;
  ${(p) => p.$thick && 'border-left: 2px solid #c8c8c8;'}
  text-align: center;
  vertical-align: bottom;
  line-height: 20px;
  padding: 0 !important;
  padding-top: 2px !important;
`;

const DataRow = styled.tr`
  height: 20px;
  td {
    padding-top: 2px;
  }
`;

const Cell = styled.td`
  border: 1px solid #c8c8c8;
  text-align: ${(p) => p.$align || 'left'};
  ${(p) => p.$date && 'letter-spacing: 0.35px;'}
  ${(p) => p.$bg && `background: ${p.$bg};`}
`;

const NameCell = styled(Cell)`
  padding-left: 1px !important;
`;

const dayCellFill = (p) => {
  if (p.$cn) {
    if (p.$fill === 'blue') return cnPattern('#9dc3e6', '#2a4260');
    if (p.$fill === 'gray') return cnPattern('#a6a6a6', '#2e2e2e');
    return cnPattern('#ffefbf', '#333');
  }
  if (p.$fill === 'blue') return 'background: #9dc3e6;';
  if (p.$fill === 'gray') return 'background: #a6a6a6;';
  return '';
};

const DayCell = styled.td`
  border: 1px solid #c8c8c8;
  ${(p) => p.$cn && 'border-top: 0; border-bottom: 0;'}
  padding-left: 0 !important;
  padding-right: 0 !important;
  text-align: center;
  ${dayCellFill}
`;

const NumCell = styled.td`
  position: relative;
  overflow: visible !important;
  border: 1px solid #c8c8c8;
  ${(p) => p.$thick && 'border-left: 2px solid #c8c8c8;'}
  text-align: right;
  padding-right: ${(p) => (p.$dash ? 17 : 8)}px !important;
`;

const OliveBlob = styled.div`
  position: absolute;
  left: -9px;
  top: -2px;
  width: 9px;
  height: 20px;
  background: #a9a900;
`;

const YellowBlob = styled.div`
  position: absolute;
  left: 2px;
  top: -4px;
  width: 56px;
  height: 28px;
  border-radius: 45% 45% 50% 50% / 30% 30% 30% 30%;
  background: #ffff00;
`;

const SelectBoxMark = styled.div`
  position: absolute;
  left: -1px;
  top: -1px;
  width: 62px;
  height: 22px;
  padding-right: 17px;
  text-align: right;
  line-height: 18px;
  background: #ffff00;
  border: 2px solid #217346;
  i {
    position: absolute;
    right: -3px;
    bottom: -3px;
    width: 5px;
    height: 5px;
    background: #217346;
    border: 1px solid #fff;
  }
`;

const TotalRow = styled.tr`
  height: 21px;
  border-top: 2px solid #c8c8c8;
  border-bottom: 3px double #c8c8c8;
  font-weight: 700;
  td {
    padding-top: 3px;
  }
`;

const TotalCell = styled.td`
  ${(p) => p.$pl && `padding-left: ${p.$pl}px !important;`}
  ${(p) => p.$num && `text-align: right; padding-right: ${p.$dash ? 17 : 8}px !important;`}
`;

const FooterRow = styled.div`
  display: flex;
  margin-top: 41px;
  padding-left: 40px;
  font-size: 15px;
`;

const FooterNote = styled.div`
  flex: none;
  width: 445px;
  line-height: 20px;
`;

const Legend = styled.div`
  flex: none;
  width: ${(p) => p.$w}px;
  margin-right: ${(p) => p.$mr || 0}px;
`;

const LegendHead = styled.div`
  height: 22px;
  padding-left: 2px;
  line-height: 20px;
  font-weight: 700;
  color: #44546a;
  border-bottom: 3px solid #a4b7dd;
`;

const LegendLine = styled.div`
  padding-left: 2px;
  line-height: 20px;
  white-space: nowrap;
`;

const LegendKey = styled.span`
  display: inline-block;
  width: 182px;
`;

export default App;
